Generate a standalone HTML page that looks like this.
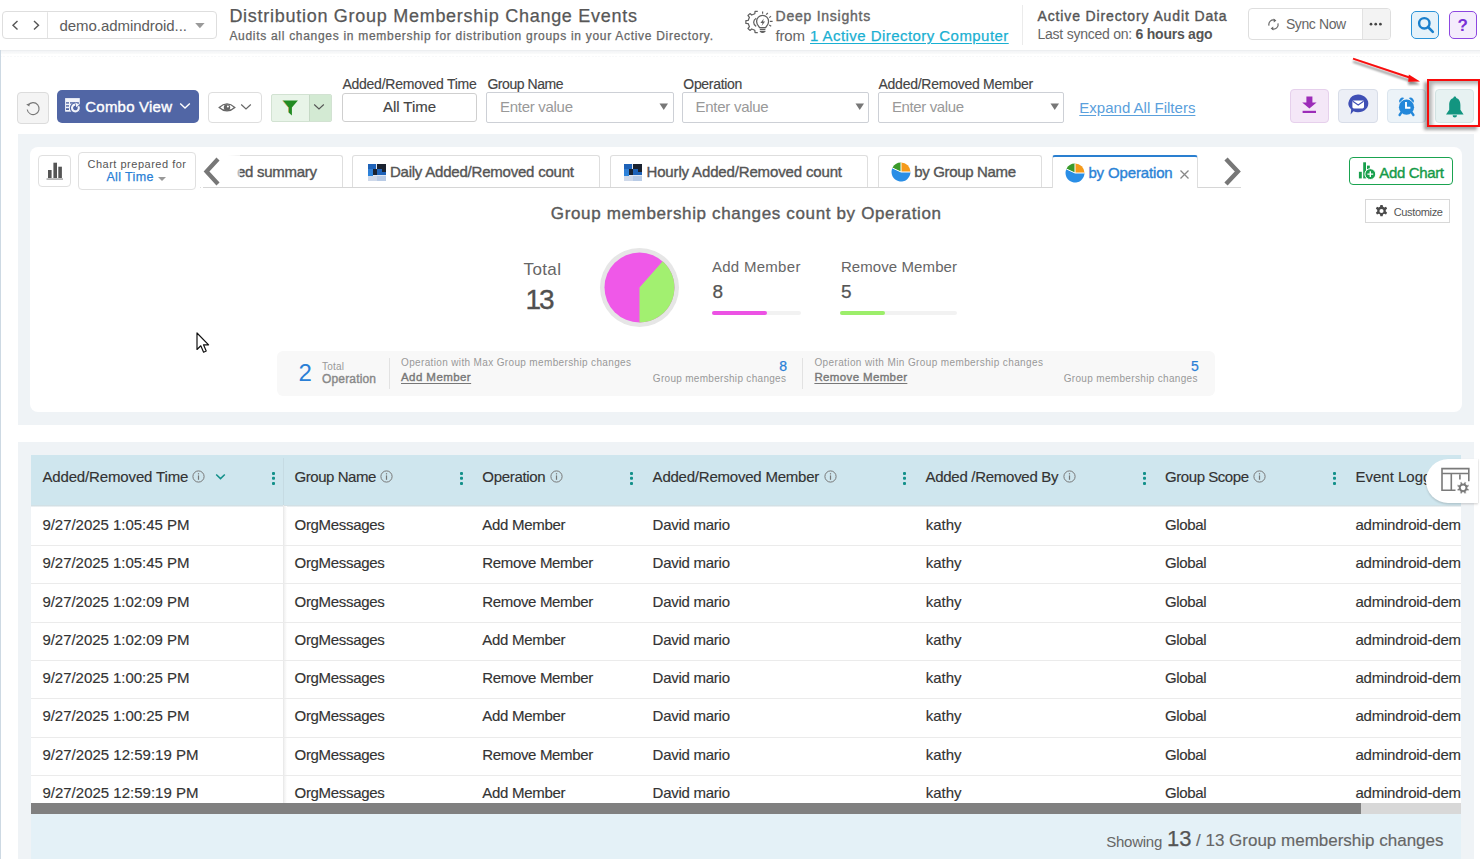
<!DOCTYPE html>
<html><head><meta charset="utf-8">
<style>
*{box-sizing:border-box;margin:0;padding:0}
html,body{width:1480px;height:859px;overflow:hidden;background:#fff;font-family:"Liberation Sans",sans-serif;color:#555}
.a{position:absolute}
.t{position:absolute;white-space:nowrap;line-height:1}
</style></head><body>

<div class="a" style="left:0;top:0;width:1480px;height:50px;background:#fff"></div>
<div class="a" style="left:0;top:50px;width:1480px;height:1px;background:#eceef0"></div>
<div class="a" style="left:0;top:51px;width:1480px;height:3px;background:linear-gradient(#f3f4f6,#fafbfb)"></div>
<div class="a" style="left:0;top:56px;width:1480px;height:1px;background:repeating-linear-gradient(90deg,#f8f9fa 0 2px,#fff 2px 3.4px)"></div>
<div class="a" style="left:0;top:50px;width:1px;height:809px;background:#cdd9e3"></div>
<div class="a" style="left:2px;top:11px;width:215px;height:28px;border:1px solid #dedede;border-radius:4px"></div>
<div class="a" style="left:47px;top:12px;width:1px;height:26px;background:#e3e3e3;border-radius:3px"></div>
<svg class="a" style="left:10px;top:19px" width="10" height="12"><path d="M7.5 2 L3 6.2 L7.5 10.4" stroke="#555" stroke-width="1.4" fill="none"/></svg>
<svg class="a" style="left:31px;top:19px" width="10" height="12"><path d="M3 2 L7.5 6.2 L3 10.4" stroke="#555" stroke-width="1.4" fill="none"/></svg>
<svg class="a" style="left:194px;top:22px" width="12" height="8"><path d="M1.2 1 L10.6 1 L5.9 6.2Z" fill="#9a9a9a"/></svg>
<div class="t" id="t0" style="left:59.50px;top:18.10px;font-size:15px;color:#5c5c5c;font-weight:400;font-family:'Liberation Sans',sans-serif;letter-spacing:-0.053px;">demo.admindroid...</div>
<div class="t" id="t1" style="left:229.40px;top:7.46px;font-size:18px;color:#575757;font-weight:400;-webkit-text-stroke:0.25px #575757;font-family:'Liberation Sans',sans-serif;letter-spacing:0.724px;">Distribution Group Membership Change Events</div>
<div class="t" id="t2" style="left:229.40px;top:29.54px;font-size:12px;color:#666;font-weight:400;-webkit-text-stroke:0.25px #666;font-family:'Liberation Sans',sans-serif;letter-spacing:0.703px;">Audits all changes in membership for distribution groups in your Active Directory.</div>
<svg class="a" style="left:740px;top:0px" width="36" height="36" viewBox="0 0 36 36">
<path d="M17.78 11.49 L15.02 11.49 L14.80 13.75 L11.70 15.04 L9.95 13.59 L7.99 15.55 L9.44 17.30 L8.15 20.40 L5.89 20.62 L5.89 23.38 L8.15 23.60 L9.44 26.70 L7.99 28.45 L9.95 30.41 L11.70 28.96 L14.80 30.25 L15.02 32.51 L17.78 32.51" stroke="#606060" stroke-width="1.25" fill="none" stroke-linejoin="round"/>
<path d="M16.2 18.2 A4.6 4.6 0 0 0 16.2 26.4" stroke="#606060" stroke-width="1.25" fill="none"/>
<path d="M19.6 27.6 C18.6 26 16.6 24.4 16.6 21.4 A6 6 0 0 1 28.6 21.4 C28.6 24.4 26.6 26 25.6 27.6 Z" stroke="#606060" stroke-width="1.3" fill="#fff"/>
<path d="M19.8 29.4 H25.4 M19.8 31.3 H25.4" stroke="#606060" stroke-width="1.2"/>
<path d="M20.2 31.3 Q22.6 33.4 25 31.3" stroke="#606060" stroke-width="1.1" fill="none"/>
<path d="M23.8 18.6 L20.4 23 H22.5 L21.6 26 L25.1 21.4 H23Z" fill="#606060"/>
<path d="M22.6 11.6 V13.8 M26.2 14.6 L27.8 13 M29.2 17.6 L31 16.2 M30 21.3 H32.6 M29.2 25 L31.2 26.2" stroke="#606060" stroke-width="1.2"/>
</svg>
<div class="t" id="t3" style="left:775.60px;top:8.55px;font-size:14px;color:#666;font-weight:400;-webkit-text-stroke:0.38px #666;font-family:'Liberation Sans',sans-serif;letter-spacing:0.749px;">Deep Insights</div>
<div class="t" id="t4" style="left:775.60px;top:28.20px;font-size:15px;color:#666;font-weight:400;font-family:'Liberation Sans',sans-serif;letter-spacing:-0.200px;">from</div>
<div class="t" id="t5" style="left:810.00px;top:28.20px;font-size:15px;color:#1ab0d2;font-weight:400;-webkit-text-stroke:0.25px #1ab0d2;font-family:'Liberation Sans',sans-serif;letter-spacing:0.445px;text-decoration:underline;text-underline-offset:1.5px;text-decoration-thickness:1.2px">1 Active Directory Computer</div>
<div class="a" style="left:1022px;top:5px;width:1px;height:40px;background:#ebebeb"></div>
<div class="t" id="t6" style="left:1037.50px;top:8.55px;font-size:14px;color:#555;font-weight:400;-webkit-text-stroke:0.38px #555;font-family:'Liberation Sans',sans-serif;letter-spacing:0.869px;">Active Directory Audit Data</div>
<div class="t" id="t7" style="left:1037.50px;top:27.05px;font-size:14px;color:#666;font-weight:400;font-family:'Liberation Sans',sans-serif;letter-spacing:-0.243px;">Last synced on: <b style="color:#555">6 hours ago</b></div>
<div class="a" style="left:1248px;top:8px;width:143px;height:32px;border:1px solid #dedede;border-radius:4px;background:#fff;overflow:hidden"><div style="position:absolute;left:113px;top:0;width:29px;height:30px;background:#f3f3f3;border-left:1px solid #e2e2e2"></div></div>
<svg class="a" style="left:1366px;top:21px" width="20" height="6"><circle cx="5" cy="3.2" r="1.35" fill="#444"/><circle cx="9.7" cy="3.2" r="1.35" fill="#444"/><circle cx="14.4" cy="3.2" r="1.35" fill="#444"/></svg>
<svg class="a" style="left:1267px;top:18px" width="13" height="13" viewBox="0 0 13 13"><path d="M2 7.6 A4.5 4.5 0 0 1 7.8 2.2" stroke="#666" stroke-width="1.2" fill="none"/><path d="M11 5.4 A4.5 4.5 0 0 1 5.2 10.8" stroke="#666" stroke-width="1.2" fill="none"/><path d="M6.6 0.4 L9.4 2.4 L6.8 4.6Z" fill="#666"/><path d="M6.4 12.6 L3.6 10.6 L6.2 8.4Z" fill="#666"/></svg>
<div class="t" id="t8" style="left:1285.90px;top:17.35px;font-size:14px;color:#666;font-weight:400;font-family:'Liberation Sans',sans-serif;letter-spacing:-0.390px;">Sync Now</div>
<div class="a" style="left:1411px;top:11px;width:28px;height:28px;border:1.5px solid #2a93d8;border-radius:5px;background:#e5f2fa"></div>
<svg class="a" style="left:1417px;top:16px" width="18" height="18" viewBox="0 0 18 18"><circle cx="7.3" cy="7.3" r="5.2" stroke="#1a7fcc" stroke-width="2.4" fill="none"/><path d="M11 11 L15.8 15.8" stroke="#1a7fcc" stroke-width="2.6" stroke-linecap="round"/></svg>
<div class="a" style="left:1449px;top:11px;width:28px;height:28px;border:1.5px solid #8d47e0;border-radius:5px;background:#f4ecfc"></div>
<div class="t" id="t9" style="left:1457.50px;top:16.61px;font-size:17px;color:#7a30d6;font-weight:700;font-family:'Liberation Sans',sans-serif;letter-spacing:0.000px;">?</div>
<div class="a" style="left:17px;top:92px;width:32px;height:32px;border:1px solid #dcdcdc;border-radius:4px;background:#f4f4f4"></div>
<svg class="a" style="left:24px;top:99px" width="18" height="18" viewBox="0 0 18 18"><path d="M4.2 6.2 A6 6 0 1 1 3.2 10.5" stroke="#777" stroke-width="1.1" fill="none"/><path d="M2.2 5.6 L5.6 4.2 L5.4 7.6Z" fill="#777"/></svg>
<div class="a" style="left:57px;top:90px;width:142px;height:33px;border-radius:5px;background:#5166a5"></div>
<svg class="a" style="left:64px;top:97px" width="18" height="17" viewBox="0 0 18 17"><rect x="1.1" y="1.1" width="14.7" height="13.6" fill="#f2f4fa"/><rect x="2" y="5.2" width="3" height="1.4" fill="#5166a5"/><rect x="2" y="8.2" width="3" height="1.4" fill="#5166a5"/><rect x="2" y="11.2" width="3" height="1.8" fill="#5166a5"/><rect x="6" y="5.2" width="8.8" height="1.4" fill="#5166a5"/><circle cx="11.4" cy="11" r="5.6" fill="#5166a5"/><path d="M14.3 9.2 A3.4 3.4 0 1 1 11 7.6" stroke="#f2f4fa" stroke-width="2.1" fill="none"/><path d="M11.2 5.6 L15.4 7.6 L12.2 10.2Z" fill="#f2f4fa"/><circle cx="11.4" cy="11" r="1.5" fill="#5166a5"/></svg>
<div class="t" id="t10" style="left:85.30px;top:99.10px;font-size:15px;color:#fff;font-weight:400;-webkit-text-stroke:0.38px #fff;font-family:'Liberation Sans',sans-serif;letter-spacing:0.215px;">Combo View</div>
<svg class="a" style="left:179px;top:102px" width="12" height="8"><path d="M1.2 1.5 L6 6 L10.8 1.5" stroke="#fff" stroke-width="1.4" fill="none"/></svg>
<div class="a" style="left:208px;top:92px;width:54px;height:31px;border:1px solid #dedede;border-radius:4px;background:#fff"></div>
<svg class="a" style="left:218px;top:101px" width="18" height="13" viewBox="0 0 18 13"><path d="M1.2 6.4 Q9 -0.6 16.8 6.4 Q9 13.4 1.2 6.4Z" fill="none" stroke="#666" stroke-width="1.3"/><circle cx="9" cy="6.4" r="3.2" fill="#666"/><circle cx="9.9" cy="5.5" r="1" fill="#fff"/></svg>
<svg class="a" style="left:240px;top:103px" width="12" height="8"><path d="M1.2 1.5 L6 6 L10.8 1.5" stroke="#666" stroke-width="1.2" fill="none"/></svg>
<div class="a" style="left:271px;top:94px;width:61px;height:28px;border:1px solid #d2e2d2;border-radius:2px;background:#e8f4e8;overflow:hidden"><div style="position:absolute;left:37px;top:0;width:24px;height:28px;background:#d3ead3;border-left:1px solid #c5d9c5"></div></div>
<svg class="a" style="left:281px;top:99px" width="18" height="18" viewBox="0 0 18 18"><path d="M1.8 1.6 H16.9 L10.9 8.4 V16.4 L7.6 13.4 V8.4Z" fill="#228b22"/><path d="M1.8 1.6 L7.6 8.4 V13.4 L7.2 13 V8.6 L1.4 1.8Z" fill="#e0801a"/></svg>
<svg class="a" style="left:313px;top:103px" width="12" height="8"><path d="M1.2 1.5 L6 6 L10.8 1.5" stroke="#555" stroke-width="1.1" fill="none"/></svg>
<div class="t" id="t11" style="left:342.40px;top:77.35px;font-size:14px;color:#444;font-weight:400;-webkit-text-stroke:0.15px #444;font-family:'Liberation Sans',sans-serif;letter-spacing:-0.243px;">Added/Removed Time</div>
<div class="a" style="left:342px;top:93px;width:135px;height:29px;border:1px solid #cfcfcf;border-radius:3px;background:#fff"></div>
<div class="t" id="t12" style="left:383.00px;top:99.20px;font-size:15px;color:#444;font-weight:400;-webkit-text-stroke:0.15px #444;font-family:'Liberation Sans',sans-serif;letter-spacing:-0.049px;">All Time</div>
<div class="t" id="t13" style="left:487.40px;top:77.35px;font-size:14px;color:#444;font-weight:400;-webkit-text-stroke:0.15px #444;font-family:'Liberation Sans',sans-serif;letter-spacing:-0.451px;">Group Name</div>
<div class="a" style="left:486.4px;top:92px;width:187.2px;height:31px;border:1px solid #cdd0d6;border-radius:2px;background:#fff"></div>
<svg class="a" style="left:659px;top:103px" width="10" height="8"><path d="M0.5 0.5 L9 0.5 L4.75 7Z" fill="#777"/></svg>
<div class="t" id="t14" style="left:500.00px;top:98.60px;font-size:15px;color:#999;font-weight:400;font-family:'Liberation Sans',sans-serif;letter-spacing:-0.289px;">Enter value</div>
<div class="t" id="t15" style="left:683.30px;top:77.35px;font-size:14px;color:#444;font-weight:400;-webkit-text-stroke:0.15px #444;font-family:'Liberation Sans',sans-serif;letter-spacing:-0.311px;">Operation</div>
<div class="a" style="left:682.1px;top:92px;width:186.5px;height:31px;border:1px solid #cdd0d6;border-radius:2px;background:#fff"></div>
<svg class="a" style="left:855px;top:103px" width="10" height="8"><path d="M0.5 0.5 L9 0.5 L4.75 7Z" fill="#777"/></svg>
<div class="t" id="t16" style="left:695.50px;top:98.60px;font-size:15px;color:#999;font-weight:400;font-family:'Liberation Sans',sans-serif;letter-spacing:-0.269px;">Enter value</div>
<div class="t" id="t17" style="left:878.50px;top:77.35px;font-size:14px;color:#444;font-weight:400;-webkit-text-stroke:0.15px #444;font-family:'Liberation Sans',sans-serif;letter-spacing:-0.254px;">Added/Removed Member</div>
<div class="a" style="left:878px;top:92px;width:186.4px;height:31px;border:1px solid #cdd0d6;border-radius:2px;background:#fff"></div>
<svg class="a" style="left:1050px;top:103px" width="10" height="8"><path d="M0.5 0.5 L9 0.5 L4.75 7Z" fill="#777"/></svg>
<div class="t" id="t18" style="left:892.00px;top:98.60px;font-size:15px;color:#999;font-weight:400;font-family:'Liberation Sans',sans-serif;letter-spacing:-0.389px;">Enter value</div>
<div class="t" id="t19" style="left:1079.30px;top:100.40px;font-size:15px;color:#5aa0dc;font-weight:400;font-family:'Liberation Sans',sans-serif;letter-spacing:0.012px;text-decoration:underline;text-underline-offset:2px">Expand All Filters</div>
<div class="a" style="left:1290px;top:89px;width:39px;height:34px;border:1px solid #e6d0ec;border-radius:4px;background:#f4e7f7"></div>
<svg class="a" style="left:1290px;top:89px" width="40" height="34" viewBox="0 0 40 34"><path d="M16.4 7.4 H22.4 V13.6 H26.6 L19.4 19.4 L12.2 13.6 H16.4Z" fill="#9c2cb8"/><rect x="12.6" y="21.8" width="13.4" height="2.2" fill="#9c2cb8"/></svg>
<div class="a" style="left:1338px;top:89px;width:40px;height:34px;border:1px solid #d8dde8;border-radius:4px;background:#eceff6"></div>
<svg class="a" style="left:1338px;top:89px" width="40" height="34" viewBox="0 0 40 34"><path d="M20 5.6 A10.2 8.8 0 1 1 15.4 22.2 L12.6 25.6 L13.2 20.4 A10.2 8.8 0 0 1 20 5.6Z" fill="#3f4fb5"/><rect x="14.4" y="11.4" width="11.6" height="8" rx="1.4" fill="#fff"/><path d="M14.8 12.2 L20.2 16 L25.6 12.2" stroke="#3f4fb5" stroke-width="1.1" fill="none"/></svg>
<div class="a" style="left:1387px;top:89px;width:39px;height:34px;border:1px solid #dbe5ee;border-radius:4px;background:#ecf3f8"></div>
<svg class="a" style="left:1387px;top:89px" width="40" height="34" viewBox="0 0 40 34"><path d="M12.4 13.8 A3.6 3.6 0 0 1 17.2 9 Z M26.6 13.8 A3.6 3.6 0 0 0 21.8 9 Z" fill="#2488da"/><circle cx="19.5" cy="18.2" r="7.6" fill="#2488da"/><path d="M19 13 V18.8 H23.4" stroke="#fff" stroke-width="1.9" fill="none"/><path d="M14.2 23.6 L12.6 26 M24.8 23.6 L26.4 26" stroke="#2488da" stroke-width="2.4" stroke-linecap="round"/></svg>
<div class="a" style="left:1435px;top:89px;width:39px;height:34px;border:1px solid #d5e6e6;border-radius:4px;background:#e7f2f2"></div>
<svg class="a" style="left:1435px;top:89px" width="40" height="34" viewBox="0 0 40 34"><path d="M19.8 7.6 C20.8 7.6 21.2 8.3 21.2 8.9 C24.4 9.9 25.4 12.8 25.4 16 V20.8 L28.6 25.4 H11 L14.2 20.8 V16 C14.2 12.8 15.2 9.9 18.4 8.9 C18.4 8.3 18.8 7.6 19.8 7.6Z" fill="#129580"/><path d="M17.6 26.2 H22 A2.2 2.2 0 0 1 17.6 26.2Z" fill="#129580"/></svg>
<div class="a" style="left:1427px;top:79px;width:53px;height:48px;border:2px solid #f80c0c;box-shadow:-3px 3px 3px rgba(0,0,0,.36), inset 3px 3px 4px rgba(0,0,0,.32)"></div>
<svg class="a" style="left:1348px;top:54px" width="80" height="34" viewBox="0 0 80 34" style="overflow:visible"><defs><filter id="sh" x="-20%" y="-50%" width="140%" height="200%"><feGaussianBlur in="SourceAlpha" stdDeviation="1.2"/><feOffset dx="0" dy="2.5"/><feComponentTransfer><feFuncA type="linear" slope="0.45"/></feComponentTransfer><feMerge><feMergeNode/><feMergeNode in="SourceGraphic"/></feMerge></filter></defs><g filter="url(#sh)"><path d="M5 4.6 L63 24" stroke="#f80c0c" stroke-width="2"/><path d="M72 27.6 L60.2 27.8 L60.8 20.4Z" fill="#f80c0c"/></g></svg>
<div class="a" style="left:18px;top:134px;width:1456px;height:291px;background:#eff3f6"></div>
<div class="a" style="left:30px;top:147px;width:1432px;height:265px;background:#fff;border-radius:8px"></div>
<div class="a" style="left:38px;top:155px;width:33px;height:32px;border:1px solid #e0e0e0;border-radius:4px;background:#fff"></div>
<svg class="a" style="left:46px;top:161px" width="18" height="20" viewBox="0 0 18 20"><rect x="2" y="9" width="3.6" height="8" fill="#555"/><rect x="7.4" y="1.7" width="3.6" height="15.3" fill="#555"/><rect x="12.3" y="5.7" width="3.6" height="11.3" fill="#555"/><rect x="0.5" y="17.4" width="16.5" height="1.3" fill="#999"/></svg>
<div class="a" style="left:78px;top:152px;width:118px;height:38px;border:1px solid #e0e0e0;border-radius:4px;background:#fff"></div>
<div class="t" id="t20" style="left:87.50px;top:159.19px;font-size:11px;color:#555;font-weight:400;font-family:'Liberation Sans',sans-serif;letter-spacing:0.506px;">Chart prepared for</div>
<div class="t" id="t21" style="left:106.40px;top:171.22px;font-size:12.5px;color:#2a7fd6;font-weight:400;-webkit-text-stroke:0.25px #2a7fd6;font-family:'Liberation Sans',sans-serif;letter-spacing:0.364px;">All Time</div>
<svg class="a" style="left:157px;top:176px" width="10" height="6"><path d="M1 1 L9 1 L5 5Z" fill="#999"/></svg>
<div class="a" style="left:200px;top:155px;width:142.5px;height:33px;border:1px solid #dedede;border-bottom:none;border-radius:3px 3px 0 0;background:#fff"></div>
<div class="a" style="left:352px;top:155px;width:248.0px;height:33px;border:1px solid #dedede;border-bottom:none;border-radius:3px 3px 0 0;background:#fff"></div>
<div class="a" style="left:609.5px;top:155px;width:258.1px;height:33px;border:1px solid #dedede;border-bottom:none;border-radius:3px 3px 0 0;background:#fff"></div>
<div class="a" style="left:877.6px;top:155px;width:164.0px;height:33px;border:1px solid #dedede;border-bottom:none;border-radius:3px 3px 0 0;background:#fff"></div>
<div class="a" style="left:203px;top:187px;width:1038px;height:1px;background:#d6d6d6"></div>
<div class="a" style="left:1052px;top:155px;width:146px;height:33px;border:1px solid #dedede;border-top:2px solid #2a7fd0;border-bottom:none;border-radius:3px 3px 0 0;background:#fff"></div>
<div class="t" id="t22" style="left:237.00px;top:164.10px;font-size:15px;color:#555;font-weight:400;-webkit-text-stroke:0.38px #555;font-family:'Liberation Sans',sans-serif;letter-spacing:-0.281px;">ed summary</div>
<div class="a" style="left:196px;top:150px;width:44px;height:37px;background:linear-gradient(90deg,#fff 0,#fff 72%,rgba(255,255,255,.55) 100%)"></div>
<svg class="a" style="left:201px;top:156px" width="22" height="32" viewBox="0 0 22 32"><path d="M17 3 L5.5 15.5 L17 28" stroke="#777" stroke-width="4.2" fill="none"/></svg>
<svg class="a" style="left:1221px;top:156px" width="22" height="32" viewBox="0 0 22 32"><path d="M5 3 L16.8 15.5 L5 28" stroke="#777" stroke-width="4.4" fill="none"/></svg>
<svg class="a" style="left:368px;top:164px" width="18" height="17" viewBox="0 0 18 17"><rect x="0" y="0" width="18" height="17" fill="#dfe6f2"/><rect x="0" y="0" width="8" height="5" fill="#1e62b8"/><rect x="9" y="0" width="9" height="5" fill="#1a2230"/><rect x="0" y="5" width="5" height="4" fill="#2f7fd6"/><rect x="5" y="5" width="4" height="6" fill="#1a2230"/><rect x="9" y="5" width="9" height="6" fill="#1e62b8"/><rect x="0" y="9" width="5" height="3" fill="#2a83dc"/><rect x="14" y="5" width="4" height="3" fill="#1a2230"/><rect x="0" y="12" width="9" height="5" fill="#cfd9ea"/><rect x="9" y="12" width="9" height="5" fill="#b8cbe6"/></svg>
<svg class="a" style="left:624px;top:164px" width="18" height="17" viewBox="0 0 18 17"><rect x="0" y="0" width="18" height="17" fill="#dfe6f2"/><rect x="0" y="0" width="8" height="5" fill="#1e62b8"/><rect x="9" y="0" width="9" height="5" fill="#1a2230"/><rect x="0" y="5" width="5" height="4" fill="#2f7fd6"/><rect x="5" y="5" width="4" height="6" fill="#1a2230"/><rect x="9" y="5" width="9" height="6" fill="#1e62b8"/><rect x="0" y="9" width="5" height="3" fill="#2a83dc"/><rect x="14" y="5" width="4" height="3" fill="#1a2230"/><rect x="0" y="12" width="9" height="5" fill="#cfd9ea"/><rect x="9" y="12" width="9" height="5" fill="#b8cbe6"/></svg>
<div class="t" id="t23" style="left:389.90px;top:164.10px;font-size:15px;color:#555;font-weight:400;-webkit-text-stroke:0.38px #555;font-family:'Liberation Sans',sans-serif;letter-spacing:-0.216px;">Daily Added/Removed count</div>
<div class="t" id="t24" style="left:646.50px;top:164.10px;font-size:15px;color:#555;font-weight:400;-webkit-text-stroke:0.38px #555;font-family:'Liberation Sans',sans-serif;letter-spacing:-0.152px;">Hourly Added/Removed count</div>
<svg class="a" style="left:890.5px;top:162px" width="20" height="20" viewBox="0 0 20 20"><path d="M10 10 V0.5 A9.5 9.5 0 0 1 19.5 10Z" fill="#f59a1a"/><path d="M10 10 H19.5 A9.5 9.5 0 1 1 1.4 6 Z" fill="#2a8ee6"/><path d="M10 10 L1.4 6 A9.5 9.5 0 0 1 10 0.5Z" fill="#3a9a2a"/><path d="M10 10 V0.5 M10 10 H19.5 M10 10 L1.4 6" stroke="#fff" stroke-width="1"/></svg>
<svg class="a" style="left:1064.5px;top:163px" width="20" height="20" viewBox="0 0 20 20"><path d="M10 10 V0.5 A9.5 9.5 0 0 1 19.5 10Z" fill="#f59a1a"/><path d="M10 10 H19.5 A9.5 9.5 0 1 1 1.4 6 Z" fill="#2a8ee6"/><path d="M10 10 L1.4 6 A9.5 9.5 0 0 1 10 0.5Z" fill="#3a9a2a"/><path d="M10 10 V0.5 M10 10 H19.5 M10 10 L1.4 6" stroke="#fff" stroke-width="1"/></svg>
<div class="t" id="t25" style="left:914.30px;top:164.10px;font-size:15px;color:#555;font-weight:400;-webkit-text-stroke:0.38px #555;font-family:'Liberation Sans',sans-serif;letter-spacing:-0.349px;">by Group Name</div>
<div class="t" id="t26" style="left:1088.40px;top:164.60px;font-size:15px;color:#2c83d6;font-weight:400;-webkit-text-stroke:0.38px #2c83d6;font-family:'Liberation Sans',sans-serif;letter-spacing:-0.145px;">by Operation</div>
<svg class="a" style="left:1179px;top:169px" width="11" height="11"><path d="M1.5 1.5 L9.5 9.5 M9.5 1.5 L1.5 9.5" stroke="#888" stroke-width="1.3"/></svg>
<div class="a" style="left:1349px;top:157px;width:104px;height:28px;border:1.6px solid #1aa350;border-radius:4px;background:#fff"></div>
<svg class="a" style="left:1357px;top:161px" width="20" height="20" viewBox="0 0 20 20"><rect x="1.9" y="10.8" width="2.9" height="6.6" fill="#18a04c"/><rect x="6.2" y="1.3" width="2.8" height="16.1" fill="#18a04c"/><rect x="10" y="4.6" width="2.8" height="5" fill="#18a04c"/><circle cx="13.3" cy="13.1" r="5.4" fill="#18a04c" stroke="#fff" stroke-width="1"/><path d="M13.3 10.2 V16 M10.4 13.1 H16.2" stroke="#fff" stroke-width="1.4"/></svg>
<div class="t" id="t27" style="left:1379.30px;top:164.50px;font-size:15px;color:#159a48;font-weight:400;-webkit-text-stroke:0.38px #159a48;font-family:'Liberation Sans',sans-serif;letter-spacing:-0.356px;">Add Chart</div>
<div class="a" style="left:1365px;top:199px;width:85px;height:24px;border:1px solid #d8d8d8;background:#fff"></div>
<svg class="a" style="left:1374px;top:204px" width="15" height="15" viewBox="0 0 16 16"><path d="M6.8 1 h2.4 l.4 2 a5 5 0 0 1 1.3.7 l1.9-.8 1.2 2 -1.5 1.4 a5 5 0 0 1 0 1.5 l1.5 1.4 -1.2 2 -1.9-.8 a5 5 0 0 1-1.3.7 l-.4 2 h-2.4 l-.4-2 a5 5 0 0 1-1.3-.7 l-1.9.8 -1.2-2 1.5-1.4 a5 5 0 0 1 0-1.5 l-1.5-1.4 1.2-2 1.9.8 a5 5 0 0 1 1.3-.7z" fill="#4a4a4a"/><circle cx="8" cy="7.5" r="2.2" fill="#fff"/></svg>
<div class="t" id="t28" style="left:1393.70px;top:207.09px;font-size:11px;color:#555;font-weight:400;font-family:'Liberation Sans',sans-serif;letter-spacing:-0.334px;">Customize</div>
<div class="t" id="t29" style="left:550.80px;top:204.71px;font-size:17px;color:#5a5a5a;font-weight:400;-webkit-text-stroke:0.38px #5a5a5a;font-family:'Liberation Sans',sans-serif;letter-spacing:0.651px;">Group membership changes count by Operation</div>
<div class="t" id="t30" style="left:523.50px;top:260.51px;font-size:17px;color:#666;font-weight:400;font-family:'Liberation Sans',sans-serif;letter-spacing:0.395px;">Total</div>
<div class="t" id="t31" style="left:525.40px;top:286.30px;font-size:28px;color:#505050;font-weight:400;-webkit-text-stroke:0.35px #505050;font-family:'Liberation Sans',sans-serif;letter-spacing:-1.856px;">13</div>
<svg class="a" style="left:599px;top:247px" width="82" height="82" viewBox="0 0 82 82"><circle cx="40.5" cy="40.5" r="39.5" fill="#e6e6e6"/><circle cx="40.5" cy="40.5" r="35" fill="#ef58e8"/><path d="M40.5 40.5 L63.69 14.29 A35 35 0 0 1 40.5 75.5Z" fill="#a2f070"/></svg>
<div class="t" id="t32" style="left:711.90px;top:258.70px;font-size:15px;color:#666;font-weight:400;font-family:'Liberation Sans',sans-serif;letter-spacing:0.292px;">Add Member</div>
<div class="t" id="t33" style="left:712.40px;top:281.72px;font-size:19px;color:#555;font-weight:400;-webkit-text-stroke:0.25px #555;font-family:'Liberation Sans',sans-serif;letter-spacing:0.000px;">8</div>
<div class="a" style="left:712px;top:311px;width:89px;height:4px;border-radius:2px;background:#f2f2f2"></div>
<div class="a" style="left:712px;top:311px;width:55px;height:4px;border-radius:2px;background:#ec52e4"></div>
<div class="t" id="t34" style="left:840.90px;top:258.70px;font-size:15px;color:#666;font-weight:400;font-family:'Liberation Sans',sans-serif;letter-spacing:0.088px;">Remove Member</div>
<div class="t" id="t35" style="left:840.90px;top:281.72px;font-size:19px;color:#555;font-weight:400;-webkit-text-stroke:0.25px #555;font-family:'Liberation Sans',sans-serif;letter-spacing:0.000px;">5</div>
<div class="a" style="left:840px;top:311px;width:117px;height:4px;border-radius:2px;background:#f2f2f2"></div>
<div class="a" style="left:840px;top:311px;width:45px;height:4px;border-radius:2px;background:#9cee6a"></div>
<div class="a" style="left:277px;top:351px;width:938px;height:45px;border-radius:6px;background:#f8f8f8"></div>
<div class="t" id="t36" style="left:298.40px;top:360.68px;font-size:24px;color:#2a7fd6;font-weight:400;font-family:'Liberation Sans',sans-serif;letter-spacing:0.000px;">2</div>
<div class="t" id="t37" style="left:322.00px;top:361.54px;font-size:10px;color:#999;font-weight:400;font-family:'Liberation Sans',sans-serif;letter-spacing:0.219px;">Total</div>
<div class="t" id="t38" style="left:322.00px;top:372.84px;font-size:12px;color:#888;font-weight:400;-webkit-text-stroke:0.38px #888;font-family:'Liberation Sans',sans-serif;letter-spacing:0.162px;">Operation</div>
<div class="a" style="left:389px;top:358px;width:1px;height:31px;background:#e2e2e2"></div>
<div class="t" id="t39" style="left:401.00px;top:357.54px;font-size:10px;color:#999;font-weight:400;font-family:'Liberation Sans',sans-serif;letter-spacing:0.355px;">Operation with Max Group membership changes</div>
<div class="t" id="t40" style="left:401.00px;top:372.07px;font-size:11.5px;color:#777;font-weight:400;-webkit-text-stroke:0.38px #777;font-family:'Liberation Sans',sans-serif;letter-spacing:0.428px;text-decoration:underline;text-underline-offset:1.5px">Add Member</div>
<div class="t" id="t41" style="left:779.20px;top:358.65px;font-size:14px;color:#2a7fd6;font-weight:400;-webkit-text-stroke:0.25px #2a7fd6;font-family:'Liberation Sans',sans-serif;letter-spacing:0.000px;">8</div>
<div class="t" id="t42" style="left:652.80px;top:373.54px;font-size:10px;color:#999;font-weight:400;font-family:'Liberation Sans',sans-serif;letter-spacing:0.305px;">Group membership changes</div>
<div class="a" style="left:802px;top:358px;width:1px;height:31px;background:#e2e2e2"></div>
<div class="t" id="t43" style="left:814.40px;top:357.54px;font-size:10px;color:#999;font-weight:400;font-family:'Liberation Sans',sans-serif;letter-spacing:0.387px;">Operation with Min Group membership changes</div>
<div class="t" id="t44" style="left:814.40px;top:372.07px;font-size:11.5px;color:#777;font-weight:400;-webkit-text-stroke:0.38px #777;font-family:'Liberation Sans',sans-serif;letter-spacing:0.366px;text-decoration:underline;text-underline-offset:1.5px">Remove Member</div>
<div class="t" id="t45" style="left:1191.00px;top:358.65px;font-size:14px;color:#2a7fd6;font-weight:400;-webkit-text-stroke:0.25px #2a7fd6;font-family:'Liberation Sans',sans-serif;letter-spacing:0.000px;">5</div>
<div class="t" id="t46" style="left:1063.70px;top:373.54px;font-size:10px;color:#999;font-weight:400;font-family:'Liberation Sans',sans-serif;letter-spacing:0.331px;">Group membership changes</div>
<svg class="a" style="left:196px;top:332px" width="14" height="22" viewBox="0 0 14 22"><path d="M1 1 V17.5 L4.8 13.8 L7.6 20.2 L10.2 19 L7.5 12.8 L12.6 12.8Z" fill="#fff" stroke="#111" stroke-width="1.2" stroke-linejoin="round"/></svg>
<div class="a" style="left:18px;top:442px;width:1456px;height:417px;background:#eff3f6"></div>
<div class="a" style="left:31px;top:455px;width:1430px;height:404px;background:#fff"></div>
<div class="a" style="left:31px;top:455px;width:1430px;height:51px;background:#cfe6ee"></div>
<div class="a" style="left:31px;top:505px;width:1430px;height:2px;background:linear-gradient(#c7d9df,#f4f6f7)"></div>
<div class="a" style="left:283px;top:458px;width:1px;height:345px;background:linear-gradient(#c6dbe3 0,#c6dbe3 47px,#eaeaea 47px)"></div>
<div class="a" style="left:284px;top:506px;width:3px;height:297px;background:linear-gradient(90deg,#f0f0f0,#fff)"></div>
<div class="t" id="t47" style="left:42.40px;top:469.30px;font-size:15px;color:#333;font-weight:400;-webkit-text-stroke:0.15px #333;font-family:'Liberation Sans',sans-serif;letter-spacing:-0.142px;">Added/Removed Time</div>
<svg class="a" style="left:191.8px;top:470px" width="13" height="13" viewBox="0 0 13 13"><circle cx="6.5" cy="6.5" r="5.6" stroke="#777" stroke-width="1" fill="none"/><rect x="5.9" y="5.4" width="1.2" height="4.4" fill="#777"/><rect x="5.9" y="3.2" width="1.2" height="1.2" fill="#777"/></svg>
<svg class="a" style="left:271.0px;top:471px" width="5" height="15"><rect x="1" y="1" width="3" height="3" rx="1" fill="#13908a"/><rect x="1" y="5.8" width="3" height="3" rx="1" fill="#13908a"/><rect x="1" y="10.9" width="3" height="3.2" rx="1" fill="#13908a"/></svg>
<div class="t" id="t48" style="left:294.60px;top:469.30px;font-size:15px;color:#333;font-weight:400;-webkit-text-stroke:0.15px #333;font-family:'Liberation Sans',sans-serif;letter-spacing:-0.464px;">Group Name</div>
<svg class="a" style="left:380.0px;top:470px" width="13" height="13" viewBox="0 0 13 13"><circle cx="6.5" cy="6.5" r="5.6" stroke="#777" stroke-width="1" fill="none"/><rect x="5.9" y="5.4" width="1.2" height="4.4" fill="#777"/><rect x="5.9" y="3.2" width="1.2" height="1.2" fill="#777"/></svg>
<svg class="a" style="left:458.5px;top:471px" width="5" height="15"><rect x="1" y="1" width="3" height="3" rx="1" fill="#13908a"/><rect x="1" y="5.8" width="3" height="3" rx="1" fill="#13908a"/><rect x="1" y="10.9" width="3" height="3.2" rx="1" fill="#13908a"/></svg>
<div class="t" id="t49" style="left:482.30px;top:469.30px;font-size:15px;color:#333;font-weight:400;-webkit-text-stroke:0.15px #333;font-family:'Liberation Sans',sans-serif;letter-spacing:-0.309px;">Operation</div>
<svg class="a" style="left:550.0px;top:470px" width="13" height="13" viewBox="0 0 13 13"><circle cx="6.5" cy="6.5" r="5.6" stroke="#777" stroke-width="1" fill="none"/><rect x="5.9" y="5.4" width="1.2" height="4.4" fill="#777"/><rect x="5.9" y="3.2" width="1.2" height="1.2" fill="#777"/></svg>
<svg class="a" style="left:628.7px;top:471px" width="5" height="15"><rect x="1" y="1" width="3" height="3" rx="1" fill="#13908a"/><rect x="1" y="5.8" width="3" height="3" rx="1" fill="#13908a"/><rect x="1" y="10.9" width="3" height="3.2" rx="1" fill="#13908a"/></svg>
<div class="t" id="t50" style="left:652.60px;top:469.30px;font-size:15px;color:#333;font-weight:400;-webkit-text-stroke:0.15px #333;font-family:'Liberation Sans',sans-serif;letter-spacing:-0.222px;">Added/Removed Member</div>
<svg class="a" style="left:824.0px;top:470px" width="13" height="13" viewBox="0 0 13 13"><circle cx="6.5" cy="6.5" r="5.6" stroke="#777" stroke-width="1" fill="none"/><rect x="5.9" y="5.4" width="1.2" height="4.4" fill="#777"/><rect x="5.9" y="3.2" width="1.2" height="1.2" fill="#777"/></svg>
<svg class="a" style="left:901.9px;top:471px" width="5" height="15"><rect x="1" y="1" width="3" height="3" rx="1" fill="#13908a"/><rect x="1" y="5.8" width="3" height="3" rx="1" fill="#13908a"/><rect x="1" y="10.9" width="3" height="3.2" rx="1" fill="#13908a"/></svg>
<div class="t" id="t51" style="left:925.50px;top:469.30px;font-size:15px;color:#333;font-weight:400;-webkit-text-stroke:0.15px #333;font-family:'Liberation Sans',sans-serif;letter-spacing:-0.280px;">Added /Removed By</div>
<svg class="a" style="left:1063.0px;top:470px" width="13" height="13" viewBox="0 0 13 13"><circle cx="6.5" cy="6.5" r="5.6" stroke="#777" stroke-width="1" fill="none"/><rect x="5.9" y="5.4" width="1.2" height="4.4" fill="#777"/><rect x="5.9" y="3.2" width="1.2" height="1.2" fill="#777"/></svg>
<svg class="a" style="left:1142.0px;top:471px" width="5" height="15"><rect x="1" y="1" width="3" height="3" rx="1" fill="#13908a"/><rect x="1" y="5.8" width="3" height="3" rx="1" fill="#13908a"/><rect x="1" y="10.9" width="3" height="3.2" rx="1" fill="#13908a"/></svg>
<div class="t" id="t52" style="left:1165.10px;top:469.30px;font-size:15px;color:#333;font-weight:400;-webkit-text-stroke:0.15px #333;font-family:'Liberation Sans',sans-serif;letter-spacing:-0.449px;">Group Scope</div>
<svg class="a" style="left:1253.2px;top:470px" width="13" height="13" viewBox="0 0 13 13"><circle cx="6.5" cy="6.5" r="5.6" stroke="#777" stroke-width="1" fill="none"/><rect x="5.9" y="5.4" width="1.2" height="4.4" fill="#777"/><rect x="5.9" y="3.2" width="1.2" height="1.2" fill="#777"/></svg>
<svg class="a" style="left:1331.5px;top:471px" width="5" height="15"><rect x="1" y="1" width="3" height="3" rx="1" fill="#13908a"/><rect x="1" y="5.8" width="3" height="3" rx="1" fill="#13908a"/><rect x="1" y="10.9" width="3" height="3.2" rx="1" fill="#13908a"/></svg>
<svg class="a" style="left:215px;top:473px" width="11" height="8"><path d="M1.2 1.5 L5.5 5.6 L9.8 1.5" stroke="#13908a" stroke-width="1.5" fill="none"/></svg>
<div class="t" id="t53" style="left:1355.50px;top:469.30px;font-size:15px;color:#333;font-weight:400;-webkit-text-stroke:0.15px #333;font-family:'Liberation Sans',sans-serif;letter-spacing:0.000px;">Event Logger</div>
<div class="t" id="t54" style="left:42.40px;top:517.30px;font-size:15px;color:#333;font-weight:400;-webkit-text-stroke:0.15px #333;font-family:'Liberation Sans',sans-serif;letter-spacing:-0.033px;">9/27/2025 1:05:45 PM</div>
<div class="t" id="t55" style="left:294.60px;top:517.30px;font-size:15px;color:#333;font-weight:400;-webkit-text-stroke:0.15px #333;font-family:'Liberation Sans',sans-serif;letter-spacing:-0.328px;">OrgMessages</div>
<div class="t" id="t56" style="left:482.30px;top:517.30px;font-size:15px;color:#333;font-weight:400;-webkit-text-stroke:0.15px #333;font-family:'Liberation Sans',sans-serif;letter-spacing:-0.297px;">Add Member</div>
<div class="t" id="t57" style="left:652.60px;top:517.30px;font-size:15px;color:#333;font-weight:400;-webkit-text-stroke:0.15px #333;font-family:'Liberation Sans',sans-serif;letter-spacing:-0.263px;">David mario</div>
<div class="t" id="t58" style="left:925.80px;top:517.30px;font-size:15px;color:#333;font-weight:400;-webkit-text-stroke:0.15px #333;font-family:'Liberation Sans',sans-serif;letter-spacing:-0.015px;">kathy</div>
<div class="t" id="t59" style="left:1165.10px;top:517.30px;font-size:15px;color:#333;font-weight:400;-webkit-text-stroke:0.15px #333;font-family:'Liberation Sans',sans-serif;letter-spacing:-0.392px;">Global</div>
<div class="t" id="t60" style="left:1355.50px;top:517.30px;font-size:15px;color:#333;font-weight:400;-webkit-text-stroke:0.15px #333;font-family:'Liberation Sans',sans-serif;letter-spacing:-0.222px;">admindroid-dem</div>
<div class="a" style="left:31px;top:545.0px;width:1430px;height:1px;background:#ebebeb"></div>
<div class="t" id="t61" style="left:42.40px;top:555.00px;font-size:15px;color:#333;font-weight:400;-webkit-text-stroke:0.15px #333;font-family:'Liberation Sans',sans-serif;letter-spacing:-0.033px;">9/27/2025 1:05:45 PM</div>
<div class="t" id="t62" style="left:294.60px;top:555.00px;font-size:15px;color:#333;font-weight:400;-webkit-text-stroke:0.15px #333;font-family:'Liberation Sans',sans-serif;letter-spacing:-0.328px;">OrgMessages</div>
<div class="t" id="t63" style="left:482.30px;top:555.00px;font-size:15px;color:#333;font-weight:400;-webkit-text-stroke:0.15px #333;font-family:'Liberation Sans',sans-serif;letter-spacing:-0.346px;">Remove Member</div>
<div class="t" id="t64" style="left:652.60px;top:555.00px;font-size:15px;color:#333;font-weight:400;-webkit-text-stroke:0.15px #333;font-family:'Liberation Sans',sans-serif;letter-spacing:-0.263px;">David mario</div>
<div class="t" id="t65" style="left:925.80px;top:555.00px;font-size:15px;color:#333;font-weight:400;-webkit-text-stroke:0.15px #333;font-family:'Liberation Sans',sans-serif;letter-spacing:-0.015px;">kathy</div>
<div class="t" id="t66" style="left:1165.10px;top:555.00px;font-size:15px;color:#333;font-weight:400;-webkit-text-stroke:0.15px #333;font-family:'Liberation Sans',sans-serif;letter-spacing:-0.392px;">Global</div>
<div class="t" id="t67" style="left:1355.50px;top:555.00px;font-size:15px;color:#333;font-weight:400;-webkit-text-stroke:0.15px #333;font-family:'Liberation Sans',sans-serif;letter-spacing:-0.222px;">admindroid-dem</div>
<div class="a" style="left:31px;top:583.3px;width:1430px;height:1px;background:#ebebeb"></div>
<div class="t" id="t68" style="left:42.40px;top:593.60px;font-size:15px;color:#333;font-weight:400;-webkit-text-stroke:0.15px #333;font-family:'Liberation Sans',sans-serif;letter-spacing:-0.033px;">9/27/2025 1:02:09 PM</div>
<div class="t" id="t69" style="left:294.60px;top:593.60px;font-size:15px;color:#333;font-weight:400;-webkit-text-stroke:0.15px #333;font-family:'Liberation Sans',sans-serif;letter-spacing:-0.328px;">OrgMessages</div>
<div class="t" id="t70" style="left:482.30px;top:593.60px;font-size:15px;color:#333;font-weight:400;-webkit-text-stroke:0.15px #333;font-family:'Liberation Sans',sans-serif;letter-spacing:-0.346px;">Remove Member</div>
<div class="t" id="t71" style="left:652.60px;top:593.60px;font-size:15px;color:#333;font-weight:400;-webkit-text-stroke:0.15px #333;font-family:'Liberation Sans',sans-serif;letter-spacing:-0.263px;">David mario</div>
<div class="t" id="t72" style="left:925.80px;top:593.60px;font-size:15px;color:#333;font-weight:400;-webkit-text-stroke:0.15px #333;font-family:'Liberation Sans',sans-serif;letter-spacing:-0.015px;">kathy</div>
<div class="t" id="t73" style="left:1165.10px;top:593.60px;font-size:15px;color:#333;font-weight:400;-webkit-text-stroke:0.15px #333;font-family:'Liberation Sans',sans-serif;letter-spacing:-0.392px;">Global</div>
<div class="t" id="t74" style="left:1355.50px;top:593.60px;font-size:15px;color:#333;font-weight:400;-webkit-text-stroke:0.15px #333;font-family:'Liberation Sans',sans-serif;letter-spacing:-0.222px;">admindroid-dem</div>
<div class="a" style="left:31px;top:621.6px;width:1430px;height:1px;background:#ebebeb"></div>
<div class="t" id="t75" style="left:42.40px;top:631.90px;font-size:15px;color:#333;font-weight:400;-webkit-text-stroke:0.15px #333;font-family:'Liberation Sans',sans-serif;letter-spacing:-0.033px;">9/27/2025 1:02:09 PM</div>
<div class="t" id="t76" style="left:294.60px;top:631.90px;font-size:15px;color:#333;font-weight:400;-webkit-text-stroke:0.15px #333;font-family:'Liberation Sans',sans-serif;letter-spacing:-0.328px;">OrgMessages</div>
<div class="t" id="t77" style="left:482.30px;top:631.90px;font-size:15px;color:#333;font-weight:400;-webkit-text-stroke:0.15px #333;font-family:'Liberation Sans',sans-serif;letter-spacing:-0.297px;">Add Member</div>
<div class="t" id="t78" style="left:652.60px;top:631.90px;font-size:15px;color:#333;font-weight:400;-webkit-text-stroke:0.15px #333;font-family:'Liberation Sans',sans-serif;letter-spacing:-0.263px;">David mario</div>
<div class="t" id="t79" style="left:925.80px;top:631.90px;font-size:15px;color:#333;font-weight:400;-webkit-text-stroke:0.15px #333;font-family:'Liberation Sans',sans-serif;letter-spacing:-0.015px;">kathy</div>
<div class="t" id="t80" style="left:1165.10px;top:631.90px;font-size:15px;color:#333;font-weight:400;-webkit-text-stroke:0.15px #333;font-family:'Liberation Sans',sans-serif;letter-spacing:-0.392px;">Global</div>
<div class="t" id="t81" style="left:1355.50px;top:631.90px;font-size:15px;color:#333;font-weight:400;-webkit-text-stroke:0.15px #333;font-family:'Liberation Sans',sans-serif;letter-spacing:-0.222px;">admindroid-dem</div>
<div class="a" style="left:31px;top:659.9px;width:1430px;height:1px;background:#ebebeb"></div>
<div class="t" id="t82" style="left:42.40px;top:670.00px;font-size:15px;color:#333;font-weight:400;-webkit-text-stroke:0.15px #333;font-family:'Liberation Sans',sans-serif;letter-spacing:-0.033px;">9/27/2025 1:00:25 PM</div>
<div class="t" id="t83" style="left:294.60px;top:670.00px;font-size:15px;color:#333;font-weight:400;-webkit-text-stroke:0.15px #333;font-family:'Liberation Sans',sans-serif;letter-spacing:-0.328px;">OrgMessages</div>
<div class="t" id="t84" style="left:482.30px;top:670.00px;font-size:15px;color:#333;font-weight:400;-webkit-text-stroke:0.15px #333;font-family:'Liberation Sans',sans-serif;letter-spacing:-0.346px;">Remove Member</div>
<div class="t" id="t85" style="left:652.60px;top:670.00px;font-size:15px;color:#333;font-weight:400;-webkit-text-stroke:0.15px #333;font-family:'Liberation Sans',sans-serif;letter-spacing:-0.263px;">David mario</div>
<div class="t" id="t86" style="left:925.80px;top:670.00px;font-size:15px;color:#333;font-weight:400;-webkit-text-stroke:0.15px #333;font-family:'Liberation Sans',sans-serif;letter-spacing:-0.015px;">kathy</div>
<div class="t" id="t87" style="left:1165.10px;top:670.00px;font-size:15px;color:#333;font-weight:400;-webkit-text-stroke:0.15px #333;font-family:'Liberation Sans',sans-serif;letter-spacing:-0.392px;">Global</div>
<div class="t" id="t88" style="left:1355.50px;top:670.00px;font-size:15px;color:#333;font-weight:400;-webkit-text-stroke:0.15px #333;font-family:'Liberation Sans',sans-serif;letter-spacing:-0.222px;">admindroid-dem</div>
<div class="a" style="left:31px;top:698.2px;width:1430px;height:1px;background:#ebebeb"></div>
<div class="t" id="t89" style="left:42.40px;top:708.00px;font-size:15px;color:#333;font-weight:400;-webkit-text-stroke:0.15px #333;font-family:'Liberation Sans',sans-serif;letter-spacing:-0.033px;">9/27/2025 1:00:25 PM</div>
<div class="t" id="t90" style="left:294.60px;top:708.00px;font-size:15px;color:#333;font-weight:400;-webkit-text-stroke:0.15px #333;font-family:'Liberation Sans',sans-serif;letter-spacing:-0.328px;">OrgMessages</div>
<div class="t" id="t91" style="left:482.30px;top:708.00px;font-size:15px;color:#333;font-weight:400;-webkit-text-stroke:0.15px #333;font-family:'Liberation Sans',sans-serif;letter-spacing:-0.297px;">Add Member</div>
<div class="t" id="t92" style="left:652.60px;top:708.00px;font-size:15px;color:#333;font-weight:400;-webkit-text-stroke:0.15px #333;font-family:'Liberation Sans',sans-serif;letter-spacing:-0.263px;">David mario</div>
<div class="t" id="t93" style="left:925.80px;top:708.00px;font-size:15px;color:#333;font-weight:400;-webkit-text-stroke:0.15px #333;font-family:'Liberation Sans',sans-serif;letter-spacing:-0.015px;">kathy</div>
<div class="t" id="t94" style="left:1165.10px;top:708.00px;font-size:15px;color:#333;font-weight:400;-webkit-text-stroke:0.15px #333;font-family:'Liberation Sans',sans-serif;letter-spacing:-0.392px;">Global</div>
<div class="t" id="t95" style="left:1355.50px;top:708.00px;font-size:15px;color:#333;font-weight:400;-webkit-text-stroke:0.15px #333;font-family:'Liberation Sans',sans-serif;letter-spacing:-0.222px;">admindroid-dem</div>
<div class="a" style="left:31px;top:736.5px;width:1430px;height:1px;background:#ebebeb"></div>
<div class="t" id="t96" style="left:42.40px;top:746.70px;font-size:15px;color:#333;font-weight:400;-webkit-text-stroke:0.15px #333;font-family:'Liberation Sans',sans-serif;letter-spacing:0.007px;">9/27/2025 12:59:19 PM</div>
<div class="t" id="t97" style="left:294.60px;top:746.70px;font-size:15px;color:#333;font-weight:400;-webkit-text-stroke:0.15px #333;font-family:'Liberation Sans',sans-serif;letter-spacing:-0.328px;">OrgMessages</div>
<div class="t" id="t98" style="left:482.30px;top:746.70px;font-size:15px;color:#333;font-weight:400;-webkit-text-stroke:0.15px #333;font-family:'Liberation Sans',sans-serif;letter-spacing:-0.346px;">Remove Member</div>
<div class="t" id="t99" style="left:652.60px;top:746.70px;font-size:15px;color:#333;font-weight:400;-webkit-text-stroke:0.15px #333;font-family:'Liberation Sans',sans-serif;letter-spacing:-0.263px;">David mario</div>
<div class="t" id="t100" style="left:925.80px;top:746.70px;font-size:15px;color:#333;font-weight:400;-webkit-text-stroke:0.15px #333;font-family:'Liberation Sans',sans-serif;letter-spacing:-0.015px;">kathy</div>
<div class="t" id="t101" style="left:1165.10px;top:746.70px;font-size:15px;color:#333;font-weight:400;-webkit-text-stroke:0.15px #333;font-family:'Liberation Sans',sans-serif;letter-spacing:-0.392px;">Global</div>
<div class="t" id="t102" style="left:1355.50px;top:746.70px;font-size:15px;color:#333;font-weight:400;-webkit-text-stroke:0.15px #333;font-family:'Liberation Sans',sans-serif;letter-spacing:-0.222px;">admindroid-dem</div>
<div class="a" style="left:31px;top:774.8px;width:1430px;height:1px;background:#ebebeb"></div>
<div class="t" id="t103" style="left:42.40px;top:785.00px;font-size:15px;color:#333;font-weight:400;-webkit-text-stroke:0.15px #333;font-family:'Liberation Sans',sans-serif;letter-spacing:0.007px;">9/27/2025 12:59:19 PM</div>
<div class="t" id="t104" style="left:294.60px;top:785.00px;font-size:15px;color:#333;font-weight:400;-webkit-text-stroke:0.15px #333;font-family:'Liberation Sans',sans-serif;letter-spacing:-0.328px;">OrgMessages</div>
<div class="t" id="t105" style="left:482.30px;top:785.00px;font-size:15px;color:#333;font-weight:400;-webkit-text-stroke:0.15px #333;font-family:'Liberation Sans',sans-serif;letter-spacing:-0.297px;">Add Member</div>
<div class="t" id="t106" style="left:652.60px;top:785.00px;font-size:15px;color:#333;font-weight:400;-webkit-text-stroke:0.15px #333;font-family:'Liberation Sans',sans-serif;letter-spacing:-0.263px;">David mario</div>
<div class="t" id="t107" style="left:925.80px;top:785.00px;font-size:15px;color:#333;font-weight:400;-webkit-text-stroke:0.15px #333;font-family:'Liberation Sans',sans-serif;letter-spacing:-0.015px;">kathy</div>
<div class="t" id="t108" style="left:1165.10px;top:785.00px;font-size:15px;color:#333;font-weight:400;-webkit-text-stroke:0.15px #333;font-family:'Liberation Sans',sans-serif;letter-spacing:-0.392px;">Global</div>
<div class="t" id="t109" style="left:1355.50px;top:785.00px;font-size:15px;color:#333;font-weight:400;-webkit-text-stroke:0.15px #333;font-family:'Liberation Sans',sans-serif;letter-spacing:-0.222px;">admindroid-dem</div>
<div class="a" style="left:1461px;top:442px;width:13px;height:417px;background:#eff3f6"></div>
<div class="a" style="left:1474px;top:442px;width:6px;height:417px;background:#fff"></div>
<div class="a" style="left:1426px;top:459px;width:52px;height:44px;border-radius:22px 0 0 22px;background:#fff;box-shadow:0 1.5px 2px rgba(0,0,0,.14), 1px 0 1px rgba(0,0,0,.06)"></div>
<svg class="a" style="left:1438px;top:465px" width="34" height="30" viewBox="0 0 34 30"><path d="M30.8 16.3 V3.6 H4 V25.2 H17.5 M4 8.5 H30.8 M13.3 8.5 V25.2 M21.9 9.5 V14.5" stroke="#7a7a7a" stroke-width="1.6" fill="none"/><path d="M29.72 23.64 L31.21 24.32 L30.50 26.05 L28.97 25.47 L27.77 26.67 L28.35 28.20 L26.62 28.91 L25.94 27.42 L24.26 27.42 L23.58 28.91 L21.85 28.20 L22.43 26.67 L21.23 25.47 L19.70 26.05 L18.99 24.32 L20.48 23.64 L20.48 21.96 L18.99 21.28 L19.70 19.55 L21.23 20.13 L22.43 18.93 L21.85 17.40 L23.58 16.69 L24.26 18.18 L25.94 18.18 L26.62 16.69 L28.35 17.40 L27.77 18.93 L28.97 20.13 L30.50 19.55 L31.21 21.28 L29.72 21.96Z" fill="#7a7a7a" stroke="#fff" stroke-width="0.6"/><circle cx="25.1" cy="22.8" r="2.4" fill="#fff"/></svg>
<div class="a" style="left:31px;top:803px;width:1430px;height:11px;background:#d8d8d8"></div>
<div class="a" style="left:31px;top:803px;width:1330px;height:11px;background:#808080"></div>
<div class="a" style="left:31px;top:814px;width:1430px;height:45px;background:#e4f1f7"></div>
<div class="t" id="t110" style="left:1106.20px;top:834.10px;font-size:15px;color:#666;font-weight:400;font-family:'Liberation Sans',sans-serif;letter-spacing:-0.241px;">Showing</div>
<div class="t" id="t111" style="left:1167.00px;top:828.18px;font-size:22px;color:#555;font-weight:400;-webkit-text-stroke:0.25px #555;font-family:'Liberation Sans',sans-serif;letter-spacing:0.000px;">13</div>
<div class="t" id="t112" style="left:1196.00px;top:832.41px;font-size:17px;color:#666;font-weight:400;-webkit-text-stroke:0.15px #666;font-family:'Liberation Sans',sans-serif;letter-spacing:-0.003px;">/ 13 Group membership changes</div>
</body></html>
